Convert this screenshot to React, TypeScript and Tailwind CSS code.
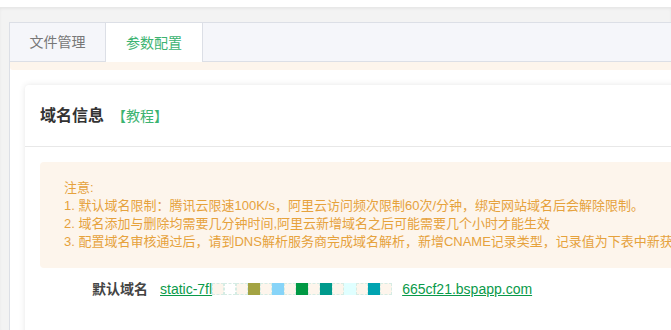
const mosaic = [
  '#fdf5ec', '', '#fdf5ec', '#a3a343', '#fdf5ec', '#87d4f8', '#fdf5ec', '#009944',
  '#fdf5ec', '#009a8c', '#fdf5ec', '#e0ffff', '#fdf5ec', '#00a3b0', '#fdf5ec',
];

export default function App() {
  return (
    <div
      className="h-[330px] w-[671px] overflow-hidden bg-white"
      style={{ fontFamily: '"Liberation Sans", "Noto Sans CJK SC", sans-serif' }}
    >
      <div className="mt-[7px] h-[323px] bg-[#f3f3f3] pl-[9px] pt-[15px] shadow-[inset_0_2px_3px_rgba(0,0,0,0.05)]">
        <div className="flex h-[340px] w-[700px] flex-col border-l border-t border-[#dcdfe6] bg-white">
          {/* tabs */}
          <div className="flex h-[39px] shrink-0 border-b border-[#dcdfe6] bg-[#f5f6fa]">
            <div className="flex w-[96px] items-center justify-center border-r border-[#dcdfe6] text-sm text-[#777]">
              文件管理
            </div>
            <div className="-mb-px flex w-[97px] items-center justify-center border-r border-[#dcdfe6] bg-white text-sm text-[#3cb371]">
              参数配置
            </div>
          </div>
          <div className="h-[8px] shrink-0 rounded-bl-[3px] bg-[#fdf5ec]" />

          {/* card */}
          <div className="ml-[15px] mt-[15px] flex-1 rounded-tl-[4px] bg-white shadow-[0_0_6px_rgba(0,0,0,0.1)]">
            <div className="flex h-[62px] items-center border-b border-[#e8e8e8] pl-[15px]">
              <span className="text-base font-bold text-[#333]">域名信息</span>
              <span className="ml-[8px] text-sm text-[#3cb371]">【教程】</span>
            </div>
            <div className="pl-[15px] pt-[15px]">
              <div className="whitespace-nowrap rounded-l-[4px] bg-[#fdf5ec] px-6 py-[17px] text-[13px] leading-[18px] text-[#e6a23c]">
                <div>注意:</div>
                <div>1. 默认域名限制：腾讯云限速100K/s，阿里云访问频次限制60次/分钟，绑定网站域名后会解除限制。</div>
                <div>2. 域名添加与删除均需要几分钟时间,阿里云新增域名之后可能需要几个小时才能生效</div>
                <div>3. 配置域名审核通过后，请到DNS解析服务商完成域名解析，新增CNAME记录类型，记录值为下表中新获取的CNAME值</div>
              </div>
              <div className="mt-[9px] flex h-[24px] items-center whitespace-nowrap pl-[52px] text-sm">
                <span className="font-bold text-[#444]">默认域名</span>
                <span className="ml-[12px] text-[#0a9a4a] underline">static-7fl</span>
                <div className="flex items-center">
                  {mosaic.map((c, i) => (
                    <span
                      key={i}
                      className="h-[12px] w-[12px] border border-dashed border-[#d6ece4]"
                      style={{ backgroundColor: c || 'transparent', borderColor: c && c !== '#fdf5ec' ? c : undefined }}
                    />
                  ))}
                </div>
                <span className="ml-[10px] text-[#0a9a4a] underline">665cf21.bspapp.com</span>
              </div>
            </div>
          </div>
        </div>
      </div>
    </div>
  );
}
